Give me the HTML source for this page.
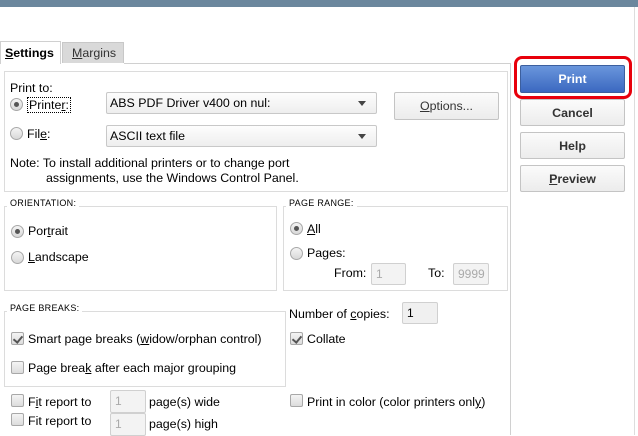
<!DOCTYPE html>
<html><head><style>
*{box-sizing:border-box}
body{margin:0;width:638px;height:435px;background:#fff;font-family:"Liberation Sans",Arial,sans-serif;font-size:12.4px;color:#000;position:relative;overflow:hidden}
.a{position:absolute}
.grp{position:absolute;border:1px solid #dcdcdc}
.lbl{position:absolute;background:#fff;font-size:9px;padding:0 3px;color:#000;letter-spacing:.3px}
.radio{position:absolute;width:13px;height:13px;border-radius:50%;border:1px solid #a8a8a8;background:linear-gradient(#f4f4f4,#d8d8d8)}
.radio.on::after{content:"";position:absolute;left:3px;top:3px;width:5px;height:5px;border-radius:50%;background:#555}
.cb{position:absolute;width:13px;height:13px;border:1px solid #a8a8a8;border-radius:2px;background:linear-gradient(#f4f4f4,#dcdcdc)}
.cb.on::after{content:"";position:absolute;left:3px;top:1px;width:4px;height:7px;border:solid #555;border-width:0 2px 2px 0;transform:rotate(40deg)}
.combo{position:absolute;border:1px solid #c8c8c8;border-radius:2px;background:linear-gradient(#fdfdfd,#eeeeee);padding:3px 3px;font-size:12.4px}
.combo::after{content:"";position:absolute;right:10px;top:8px;border:4px solid transparent;border-top:5px solid #444}
.btn{position:absolute;border:1px solid #c4c4c4;border-radius:2px;background:linear-gradient(#fbfbfb,#ececec);text-align:center;font-size:12.4px;color:#333}
.inp{position:absolute;border:1px solid #d0d0d0;border-radius:2px;background:#f3f3f3;color:#aaa;padding:3px 4px;font-size:12px}
u{text-decoration:underline}
</style></head><body>
<div class="a" style="left:0;top:0;width:638px;height:7px;background:#6b879d"></div>
<div class="a" style="left:634px;top:7px;width:1px;height:428px;background:#ddd"></div>

<div class="a" style="left:0;top:41px;width:61px;height:23px;background:#fff;border:1px solid #d0d0d0;border-bottom:none;font-weight:bold;padding:4px 0 0 4px"><u>S</u>ettings</div>
<div class="a" style="left:62px;top:42px;width:62px;height:21px;background:#d9d9d9;border:1px solid #c8c8c8;border-bottom:none;color:#333;padding:3px 0 0 9px"><u>M</u>argins</div>
<div class="a" style="left:124px;top:63px;width:387px;height:1px;background:#d0d0d0"></div>
<div class="a" style="left:510px;top:63px;width:1px;height:372px;background:#d0d0d0"></div>

<div class="grp" style="left:4px;top:71px;width:504px;height:121px"></div>
<div class="a" style="left:10px;top:81px">Print to:</div>
<div class="radio on" style="left:10px;top:98px"></div>
<div class="a" style="left:27px;top:97px;border:1px dotted #000;padding:0 1px">Printe<u>r</u>:</div>
<div class="combo" style="left:106px;top:92px;width:271px;height:22px">ABS PDF Driver v400 on nul:</div>
<div class="btn" style="left:394px;top:92px;width:105px;height:28px;padding-top:6px"><u>O</u>ptions...</div>
<div class="radio" style="left:10px;top:127px"></div>
<div class="a" style="left:27px;top:127px">Fil<u>e</u>:</div>
<div class="combo" style="left:106px;top:125px;width:271px;height:22px">ASCII text file</div>
<div class="a" style="left:10px;top:156px;line-height:15px">Note: To install additional printers or to change port<br><span style="padding-left:36px">assignments, use the Windows Control Panel.</span></div>

<div class="grp" style="left:4px;top:206px;width:273px;height:85px"></div>
<div class="lbl" style="left:7px;top:198px">ORIENTATION:</div>
<div class="radio on" style="left:11px;top:225px"></div>
<div class="a" style="left:28px;top:224px">Por<u>t</u>rait</div>
<div class="radio" style="left:11px;top:251px"></div>
<div class="a" style="left:28px;top:250px"><u>L</u>andscape</div>

<div class="grp" style="left:283px;top:206px;width:225px;height:85px"></div>
<div class="lbl" style="left:286px;top:198px">PAGE RANGE:</div>
<div class="radio on" style="left:290px;top:222px"></div>
<div class="a" style="left:307px;top:222px"><u>A</u>ll</div>
<div class="radio" style="left:290px;top:247px"></div>
<div class="a" style="left:307px;top:246px">Pa<u>g</u>es:</div>
<div class="a" style="left:334px;top:266px">From:</div>
<div class="inp" style="left:371px;top:263px;width:35px;height:22px">1</div>
<div class="a" style="left:428px;top:266px">To:</div>
<div class="inp" style="left:453px;top:263px;width:36px;height:22px">9999</div>

<div class="grp" style="left:4px;top:311px;width:282px;height:76px"></div>
<div class="lbl" style="left:7px;top:303px">PAGE BREAKS:</div>
<div class="cb on" style="left:11px;top:332px"></div>
<div class="a" style="left:28px;top:332px">Smart page breaks (<u>w</u>idow/orphan control)</div>
<div class="cb" style="left:11px;top:361px"></div>
<div class="a" style="left:28px;top:361px">Page brea<u>k</u> after each major grouping</div>

<div class="a" style="left:289px;top:307px">Number of <u>c</u>opies:</div>
<div class="inp" style="left:402px;top:302px;width:36px;height:22px;color:#000;background:#f0f0f0">1</div>
<div class="cb on" style="left:290px;top:332px"></div>
<div class="a" style="left:307px;top:332px">Collate</div>

<div class="cb" style="left:11px;top:394px"></div>
<div class="a" style="left:28px;top:395px">F<u>i</u>t report to</div>
<div class="inp" style="left:110px;top:390px;width:36px;height:23px">1</div>
<div class="a" style="left:149px;top:395px">page(s) wide</div>
<div class="cb" style="left:11px;top:413px"></div>
<div class="a" style="left:28px;top:414px">Fit report to</div>
<div class="inp" style="left:110px;top:413px;width:36px;height:23px">1</div>
<div class="a" style="left:149px;top:417px">page(s) high</div>
<div class="cb" style="left:290px;top:394px"></div>
<div class="a" style="left:307px;top:395px">Print in color (color printers onl<u>y</u>)</div>

<div class="a" style="left:514px;top:56px;width:118px;height:43px;border:3px solid #e8000b;border-radius:8px"></div>
<div class="btn" style="left:520px;top:65px;width:105px;height:28px;padding-top:6px;background:linear-gradient(#6a96dc,#3b68c0);border-color:#3c5f9e;color:#fff;font-weight:bold">Print</div>
<div class="btn" style="left:520px;top:99px;width:105px;height:27px;padding-top:6px;font-weight:bold">Cancel</div>
<div class="btn" style="left:520px;top:132px;width:105px;height:27px;padding-top:6px;font-weight:bold">Help</div>
<div class="btn" style="left:520px;top:165px;width:105px;height:27px;padding-top:6px;font-weight:bold"><u>P</u>review</div>
</body></html>
